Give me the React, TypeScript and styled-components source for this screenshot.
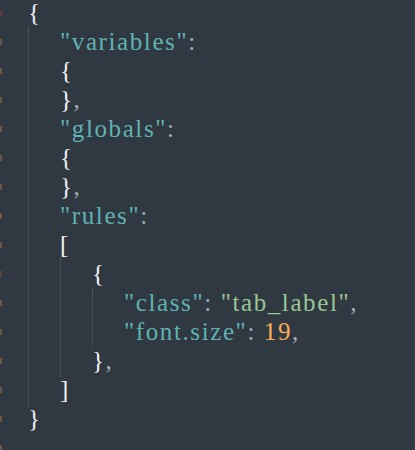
import React from "react";
import styled, { createGlobalStyle } from "styled-components";

const Global = createGlobalStyle`
  html, body { margin: 0; padding: 0; background: #303841; }
  body { overflow: hidden; }
`;

const Editor = styled.div`
  width: 415px;
  height: 450px;
  background: #303841;
  font-family: "Liberation Serif", serif;
  font-size: 25px;
  letter-spacing: 1.6px;
  color: #d8dee9;
  overflow: hidden;
  box-sizing: border-box;
  position: relative;
`;

const Code = styled.div`
  padding-left: 28px;
`;

const Row = styled.div`
  height: 29px;
  line-height: 25px;
  white-space: pre;
  display: flex;
  align-items: flex-start;
`;

const Block = styled.div`
  border-left: 1px dotted #5c6470;
  padding-left: 31px;
  margin-top: -2px;
  padding-top: 2px;
`;

const Gutter = styled.div`
  position: absolute;
  left: 0;
  top: -2px;
  width: 2px;
`;

const GutterRow = styled.div`
  height: 29px;
  display: flex;
  align-items: center;
`;

const Mark = styled.span<{ $c?: string }>`
  width: 2px;
  height: 6px;
  background: ${(p) => p.$c || "#7d6148"};
  opacity: 0.75;
`;

const Key = styled.span`color: #5fb3b3;`;
const Str = styled.span`color: #99c794;`;
const Num = styled.span`color: #f9ae58;`;
const Punc = styled.span`color: #a6acb9;`;
const Brace = styled.span`color: #eef0f4;`;

const marks = ["#6e3a3a", "#7d6148", "#7d6148", "#7d6148", "#7d6148", "#7d6148", "#7d6148", "#7d6148", "#7d6148", "#6e4a3c", "#7d6148", "#7d6148", "#7d6148", "#7d6148", "#7d6148", "#7d6148"];

export default function App() {
  return (
    <>
      <Global />
      <Editor>
        <Gutter>
          {marks.map((c, i) => (
            <GutterRow key={i}>
              <Mark $c={c} />
            </GutterRow>
          ))}
        </Gutter>
        <Code>
          <Row><Brace>{"{"}</Brace></Row>
          <Block>
            <Row><Key>"variables"</Key><Punc>:</Punc></Row>
            <Row><Brace>{"{"}</Brace></Row>
            <Row><Brace>{"}"}</Brace><Punc>,</Punc></Row>
            <Row><Key>"globals"</Key><Punc>:</Punc></Row>
            <Row><Brace>{"{"}</Brace></Row>
            <Row><Brace>{"}"}</Brace><Punc>,</Punc></Row>
            <Row><Key>"rules"</Key><Punc>:</Punc></Row>
            <Row><Brace>[</Brace></Row>
            <Block>
              <Row><Brace>{"{"}</Brace></Row>
              <Block>
                <Row><Key>"class"</Key><Punc>: </Punc><Str>"tab_label"</Str><Punc>,</Punc></Row>
                <Row><Key>"font.size"</Key><Punc>: </Punc><Num>19</Num><Punc>,</Punc></Row>
              </Block>
              <Row><Brace>{"}"}</Brace><Punc>,</Punc></Row>
            </Block>
            <Row><Brace>]</Brace></Row>
          </Block>
          <Row><Brace>{"}"}</Brace></Row>
        </Code>
      </Editor>
    </>
  );
}
